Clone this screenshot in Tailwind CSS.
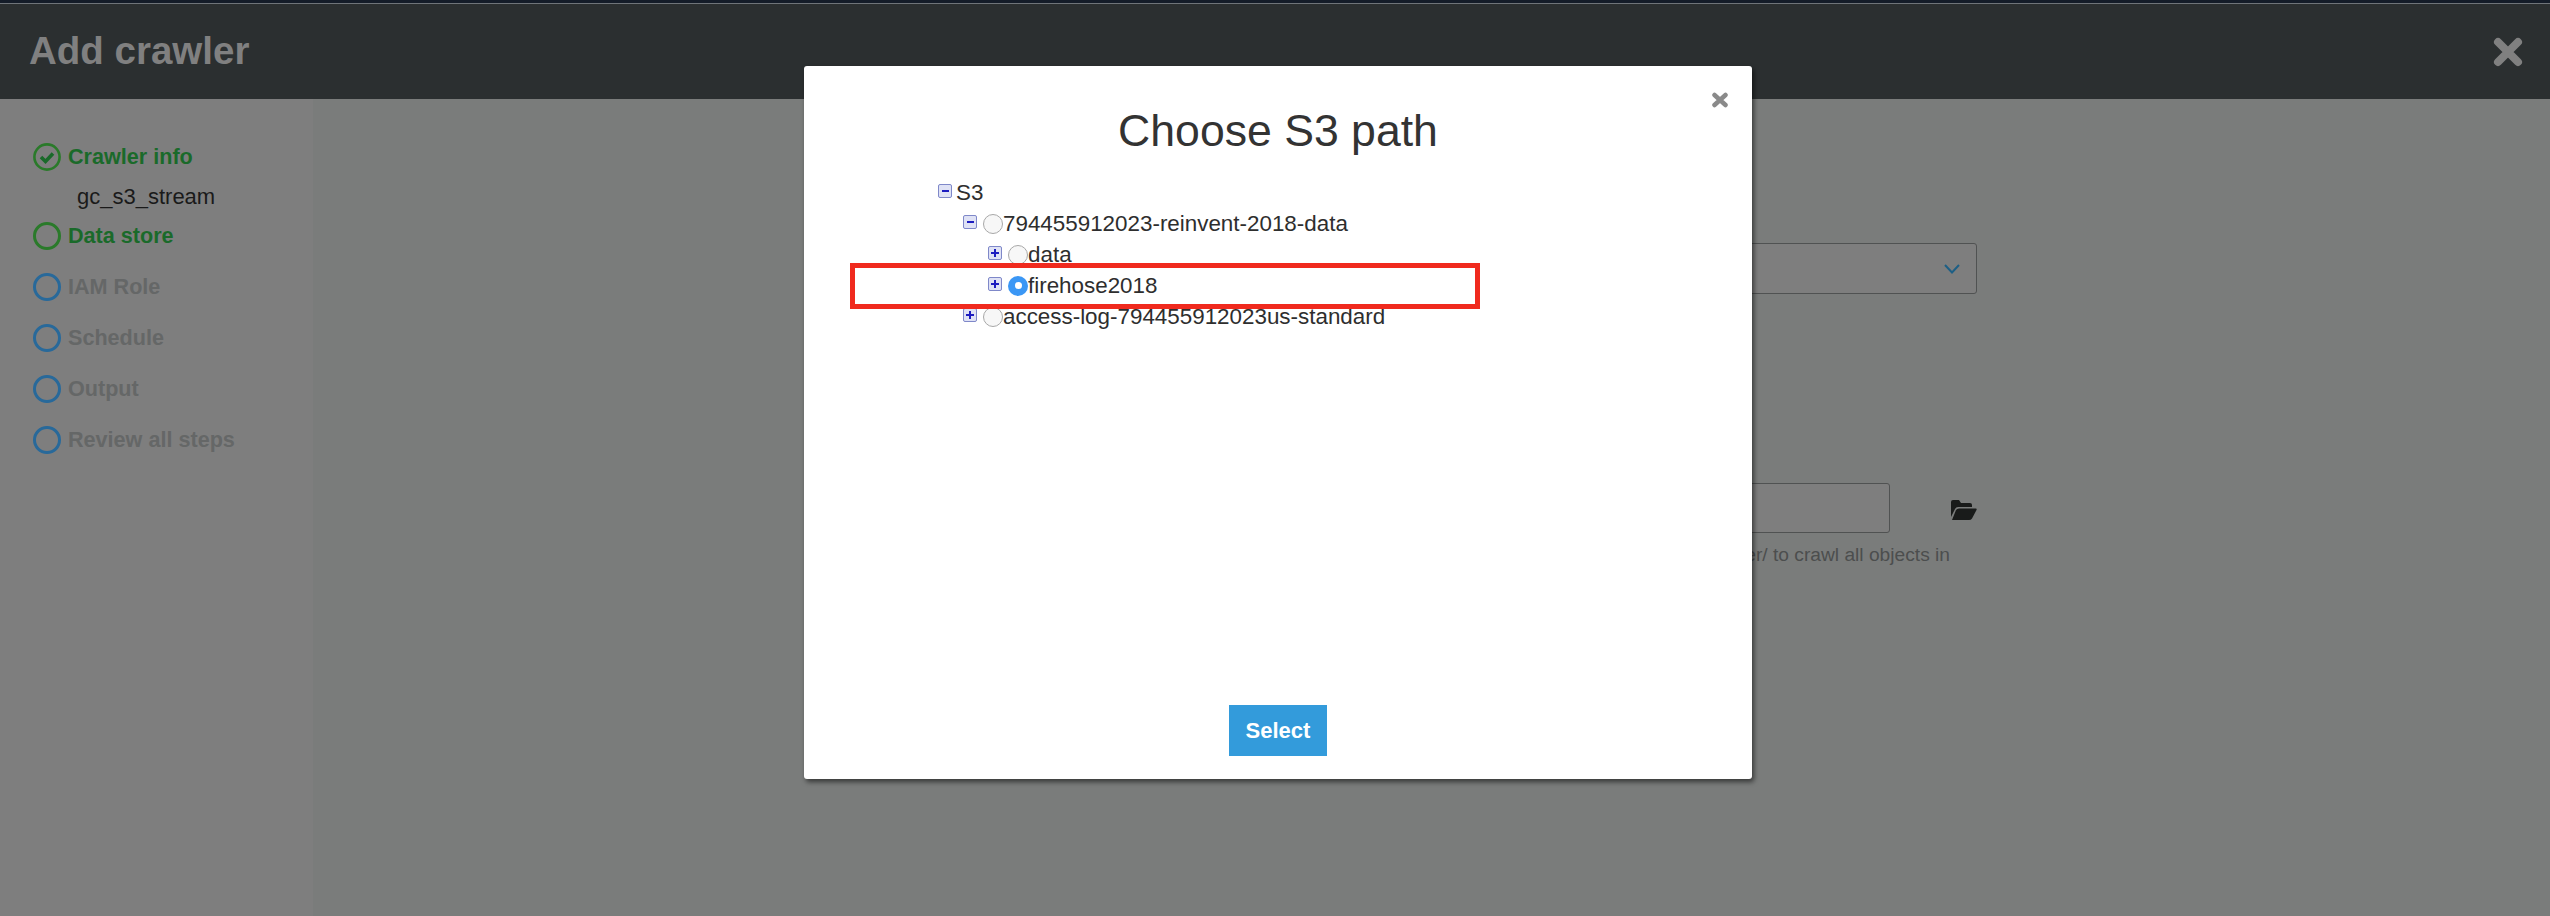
<!DOCTYPE html>
<html>
<head>
<meta charset="utf-8">
<script src="https://cdn.jsdelivr.net/npm/@tailwindcss/browser@4"></script>
</head>
<body class="m-0 font-['Liberation_Sans',Arial,sans-serif] bg-[#7a7c7b]">
<div class="relative w-[2550px] h-[916px] overflow-hidden flex flex-col bg-[#7a7c7b]">
  <div class="h-[3px] bg-[#141c28] shrink-0"></div>
  <div class="h-px bg-[#6f7479] shrink-0"></div>
  <header class="h-[95px] shrink-0 bg-[#2b2f30] flex items-center justify-between pl-[29px] pr-[27px]">
    <h1 class="text-[38.5px] font-bold text-[#808080] leading-none">Add crawler</h1>
    <svg class="w-[30px] h-[30px]" viewBox="0 0 30 30"><path d="M5 5 L25 25 M25 5 L5 25" stroke="#808080" stroke-width="8" stroke-linecap="round"/></svg>
  </header>
  <div class="flex flex-1">
    <aside class="w-[313px] shrink-0 bg-[#7e7e7e] pt-[38px] pl-[33px] text-[21.6px] leading-none">
      <div class="h-[40px] flex items-center gap-[7px] font-bold text-[#1a6a2a]">
        <svg class="w-[28px] h-[28px] shrink-0" viewBox="0 0 28 28"><circle cx="14" cy="14" r="12.6" fill="none" stroke="#2a7a2a" stroke-width="2.6"/><path d="M8 14 L12.500 18.500 L20 10.500" fill="none" stroke="#1a6a2a" stroke-width="3.6"/></svg>
        <span>Crawler info</span>
      </div>
      <div class="h-[39px] flex items-center pl-[44px] text-[22px] text-[#1a1a1a]">gc_s3_stream</div>
      <div class="h-[40px] mb-[11px] flex items-center gap-[7px] font-bold text-[#1a6a2a]">
        <span class="w-[28px] h-[28px] shrink-0 rounded-full border-[3px] border-[#2a7a2a]"></span><span>Data store</span>
      </div>
      <div class="h-[40px] mb-[11px] flex items-center gap-[7px] font-bold text-[#656767]">
        <span class="w-[28px] h-[28px] shrink-0 rounded-full border-[3px] border-[#28699a]"></span><span>IAM Role</span>
      </div>
      <div class="h-[40px] mb-[11px] flex items-center gap-[7px] font-bold text-[#656767]">
        <span class="w-[28px] h-[28px] shrink-0 rounded-full border-[3px] border-[#28699a]"></span><span>Schedule</span>
      </div>
      <div class="h-[40px] mb-[11px] flex items-center gap-[7px] font-bold text-[#656767]">
        <span class="w-[28px] h-[28px] shrink-0 rounded-full border-[3px] border-[#28699a]"></span><span>Output</span>
      </div>
      <div class="h-[40px] flex items-center gap-[7px] font-bold text-[#656767]">
        <span class="w-[28px] h-[28px] shrink-0 rounded-full border-[3px] border-[#28699a]"></span><span>Review all steps</span>
      </div>
    </aside>
    <main class="flex-1 pl-[587px] pt-[144px]">
      <div class="w-[1077px] h-[51px] rounded-[3px] border border-[#505252] bg-[#7e7e7e] flex items-center justify-end pr-[16px]">
        <svg class="w-[16px] h-[10px]" viewBox="0 0 16 10"><path d="M1 1 L8 8.5 L15 1" fill="none" stroke="#1d5f85" stroke-width="2"/></svg>
      </div>
      <div class="mt-[189px] flex items-center w-[1077px] justify-between">
        <div class="w-[990px] h-[50px] rounded-[3px] border border-[#505252] bg-[#7e7e7e]"></div>
        <svg class="w-[26px] h-[20px] mt-[3px]" viewBox="0 0 26 20"><path d="M0 17 V2 Q0 0 2 0 H8 L10 3 H19 Q21 3 21 5 V7 H7 Q5 7 4 9 Z M5 10 Q6 8.500 8 8.500 H25 Q26 8.500 25.500 10 L21 18.500 Q20 20 18 20 H1 Z" fill="#191b1a"/></svg>
      </div>
      <p class="w-[1050px] mt-[10px] text-right text-[19.2px] leading-[24px] whitespace-nowrap overflow-hidden text-[#4c4e4e]">Enter the path, for example s3://bucket/folder/ to crawl all objects in</p>
    </main>
  </div>

  <div class="absolute left-[804px] top-[66px] w-[948px] h-[713px] bg-white rounded-[3px] shadow-[2px_3px_5px_rgba(0,0,0,0.55)] flex flex-col items-center text-[#2e2e2e]">
    <svg class="absolute right-[23px] top-[26px] w-[18px] h-[16px]" viewBox="0 0 18 16"><path d="M3.500 3 L14.500 13 M14.500 3 L3.500 13" stroke="#8a8a8a" stroke-width="4.500" stroke-linecap="round"/></svg>
    <h2 class="mt-[35px] text-[44.6px] leading-[60px] font-normal text-[#333]">Choose S3 path</h2>
    <div class="self-start mt-[16px] ml-[134px] text-[22.4px] leading-[31px]">
      <div class="h-[31px] flex items-center">
        <span class="w-[14px] h-[14px] mb-[4px] mr-[4px] rounded-[2px] border border-[#7f88c9] bg-[#dfe2f5] flex items-center justify-center"><span class="w-[7px] h-[2px] bg-[#1c1cc0]"></span></span>
        <span>S3</span>
      </div>
      <div class="h-[31px] flex items-center pl-[25px]">
        <span class="w-[14px] h-[14px] mb-[4px] mr-[6px] rounded-[2px] border border-[#7f88c9] bg-[#dfe2f5] flex items-center justify-center"><span class="w-[7px] h-[2px] bg-[#1c1cc0]"></span></span>
        <span class="w-[20px] h-[20px] rounded-full border border-[#a8a8a8] bg-[#f7f7f7]"></span>
        <span>794455912023-reinvent-2018-data</span>
      </div>
      <div class="h-[31px] flex items-center pl-[50px]">
        <span class="relative w-[14px] h-[14px] mb-[4px] mr-[6px] rounded-[2px] border border-[#7f88c9] bg-[#dfe2f5] flex items-center justify-center"><span class="w-[8px] h-[2px] bg-[#1c1cc0]"></span><span class="absolute w-[2px] h-[8px] bg-[#1c1cc0]"></span></span>
        <span class="w-[20px] h-[20px] rounded-full border border-[#a8a8a8] bg-[#f7f7f7]"></span>
        <span>data</span>
      </div>
      <div class="h-[31px] flex items-center pl-[50px]">
        <span class="relative w-[14px] h-[14px] mb-[4px] mr-[6px] rounded-[2px] border border-[#7f88c9] bg-[#dfe2f5] flex items-center justify-center"><span class="w-[8px] h-[2px] bg-[#1c1cc0]"></span><span class="absolute w-[2px] h-[8px] bg-[#1c1cc0]"></span></span>
        <span class="w-[20px] h-[20px] rounded-full bg-[#3b97f5] flex items-center justify-center"><span class="w-[7px] h-[7px] rounded-full bg-white"></span></span>
        <span>firehose2018</span>
      </div>
      <div class="h-[31px] flex items-center pl-[25px]">
        <span class="relative w-[14px] h-[14px] mb-[4px] mr-[6px] rounded-[2px] border border-[#7f88c9] bg-[#dfe2f5] flex items-center justify-center"><span class="w-[8px] h-[2px] bg-[#1c1cc0]"></span><span class="absolute w-[2px] h-[8px] bg-[#1c1cc0]"></span></span>
        <span class="w-[20px] h-[20px] rounded-full border border-[#a8a8a8] bg-[#f7f7f7]"></span>
        <span>access-log-794455912023us-standard</span>
      </div>
    </div>
    <button class="absolute left-[425px] top-[639px] w-[98px] h-[51px] bg-[#339bdb] text-white font-bold text-[22px]">Select</button>
    <div class="absolute left-[46px] top-[197px] w-[630px] h-[46px] border-[5px] border-[#f02a1e]"></div>
  </div>
</div>
</body>
</html>
